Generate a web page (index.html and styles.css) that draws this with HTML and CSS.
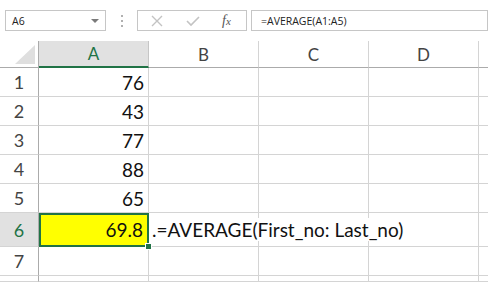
FILE: index.html
```html
<!DOCTYPE html>
<html lang="en">
<head>
    <meta charset="UTF-8">
    <title>AVERAGE</title>
    <link rel="stylesheet" href="styles.css">
</head>
<body>
    <div class="formula-bar">
        <div class="name-box">
            <span>A6</span>
            <span class="drop"></span>
        </div>
        <div class="grip"><i></i><i></i><i></i></div>
        <div class="buttons">
            <svg class="icon" width="12" height="12" viewBox="0 0 12 12"><path d="M1 1 L11 11 M11 1 L1 11" stroke="#c3c3c3" stroke-width="1.4" fill="none"/></svg>
            <svg class="icon" width="14" height="12" viewBox="0 0 14 12"><path d="M1 6 L5 10 L13 2" stroke="#c3c3c3" stroke-width="1.6" fill="none"/></svg>
            <span class="fx">f<sub>x</sub></span>
        </div>
        <div class="input">=AVERAGE(A1:A5)</div>
    </div>

    <div class="sheet">
        <div class="corner"><span class="tri"></span></div>
        <div class="col-head active">A</div>
        <div class="col-head">B</div>
        <div class="col-head">C</div>
        <div class="col-head">D</div>
        <div class="col-head edge"></div>

        <div class="row-head">1</div><div class="cell num">76</div><div class="cell"></div><div class="cell"></div><div class="cell"></div><div class="cell edge"></div>
        <div class="row-head">2</div><div class="cell num">43</div><div class="cell"></div><div class="cell"></div><div class="cell"></div><div class="cell edge"></div>
        <div class="row-head">3</div><div class="cell num">77</div><div class="cell"></div><div class="cell"></div><div class="cell"></div><div class="cell edge"></div>
        <div class="row-head">4</div><div class="cell num">88</div><div class="cell"></div><div class="cell"></div><div class="cell"></div><div class="cell edge"></div>
        <div class="row-head">5</div><div class="cell num">65</div><div class="cell"></div><div class="cell"></div><div class="cell"></div><div class="cell edge"></div>
        <div class="row-head active tall">6</div><div class="cell num selected tall">69.8<span class="handle"></span></div><div class="cell tall overflow"><span>.=AVERAGE(First_no: Last_no)</span></div><div class="cell tall"></div><div class="cell tall"></div><div class="cell edge tall"></div>
        <div class="row-head">7</div><div class="cell"></div><div class="cell"></div><div class="cell"></div><div class="cell"></div><div class="cell edge"></div>
        <div class="row-head"></div><div class="cell"></div><div class="cell"></div><div class="cell"></div><div class="cell"></div><div class="cell edge"></div>
    </div>
</body>
</html>
```

FILE: styles.css
```css
html, body {
    overflow: hidden;
}

body {
    margin: 0;
    width: 488px;
    height: 282px;
    background: #fff;
    font-family: 'Lato', 'Liberation Sans', sans-serif;
}

.formula-bar {
    display: flex;
    align-items: center;
    height: 41px;
    padding-left: 5px;
    box-sizing: border-box;
}

.name-box {
    width: 101px;
    height: 21px;
    border: 1px solid #c6c6c6;
    box-sizing: border-box;
    display: flex;
    align-items: center;
    justify-content: space-between;
    padding: 0 6px 0 6px;
    font-family: 'Open Sans', sans-serif;
    font-size: 10.5px;
    color: #222;
}

.drop {
    width: 0;
    height: 0;
    border-left: 4px solid transparent;
    border-right: 4px solid transparent;
    border-top: 4px solid #7a7a7a;
}

.grip {
    width: 31px;
    display: flex;
    flex-direction: column;
    align-items: center;
    gap: 3px;
}

.grip i {
    width: 2px;
    height: 2px;
    background: #b0b0b0;
}

.buttons {
    width: 110px;
    height: 21px;
    border: 1px solid #c6c6c6;
    box-sizing: border-box;
    display: flex;
    align-items: center;
    padding-left: 13px;
    gap: 23px;
}

.fx {
    font-family: 'Liberation Serif', serif;
    font-style: italic;
    font-size: 14px;
    color: #555;
    margin-left: -1px;
}

.fx sub {
    font-size: 11px;
    vertical-align: 0;
}

.input {
    margin-left: 4px;
    flex: 1;
    height: 21px;
    border: 1px solid #c6c6c6;
    box-sizing: border-box;
    padding-left: 9px;
    display: flex;
    align-items: center;
    font-family: 'Open Sans', sans-serif;
    font-size: 10.5px;
    color: #222;
}

.sheet {
    display: grid;
    grid-template-columns: 39px 110px 110px 110px 110px 9px;
    grid-template-rows: 27px 29px 29px 29px 29px 29px 34px 29px 6px;
}

.sheet > div {
    box-sizing: border-box;
    border-right: 1px solid #d4d4d4;
    border-bottom: 1px solid #d4d4d4;
}

.corner {
    position: relative;
    border-right-color: #ababab !important;
    border-bottom-color: #ababab !important;
}

.tri {
    position: absolute;
    right: 3px;
    bottom: 3px;
    width: 0;
    height: 0;
    border-left: 20px solid transparent;
    border-bottom: 19px solid #dfdfdf;
}

.col-head {
    display: flex;
    align-items: center;
    justify-content: center;
    font-size: 17px;
    color: #444;
    border-bottom-color: #ababab !important;
}

.col-head.active {
    background: #e1e1e1;
    color: #217346;
    border-bottom: 2px solid #217346 !important;
    border-right-color: #c6c6c6;
}

.col-head.edge,
.cell.edge {
    border-right: none;
}

.row-head {
    display: flex;
    align-items: center;
    justify-content: center;
    font-size: 18px;
    color: #444;
    border-right-color: #ababab !important;
}

.row-head.active {
    background: #e1e1e1;
    color: #217346;
}

.cell {
    display: flex;
    align-items: center;
    font-size: 19px;
    color: #111;
}

.cell.num {
    justify-content: flex-end;
    padding-right: 4px;
}

.cell.selected {
    position: relative;
    background: #ffff00;
    outline: 2px solid #217346;
    outline-offset: -2px;
    padding-right: 5px;
}

.handle {
    position: absolute;
    right: -4px;
    bottom: -4px;
    width: 5px;
    height: 5px;
    background: #217346;
    border: 1px solid #fff;
    z-index: 2;
}

.overflow {
    position: relative;
}

.overflow span {
    position: absolute;
    left: 3px;
    white-space: nowrap;
    background: #fff;
}
```
